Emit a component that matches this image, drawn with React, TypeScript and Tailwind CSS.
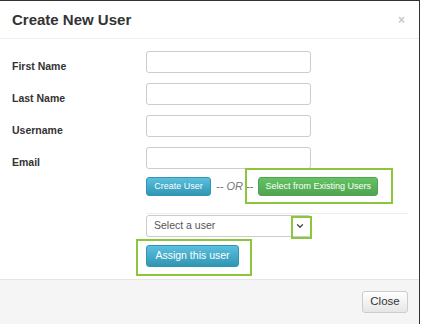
import { ChevronDown } from "lucide-react";

const font = { fontFamily: '"Liberation Sans", Arial, sans-serif' };

function Row({ label }: { label: string }) {
  return (
    <div className="flex h-[22px]">
      <label className="w-[134px] pt-[10px] text-[10.5px] font-bold leading-none text-[#333]">{label}</label>
      <input className="w-[165px] h-[22px] rounded-[3px] border border-[#ccc] bg-white outline-none" />
    </div>
  );
}

export default function App() {
  return (
    <div className="w-[424px] h-[330px] bg-white" style={font}>
      <div className="relative w-[420px] h-[324px] border-t border-r border-[#333] bg-white flex flex-col">
        {/* header */}
        <div className="h-[38px] shrink-0 flex items-center justify-between pl-3 pr-[14px] border-b border-[#eee]">
          <h3 className="text-[15px] font-bold text-[#333] pt-[2px]">Create New User</h3>
          <span className="text-[12px] font-bold text-[#c8c8c8] leading-none">×</span>
        </div>

        {/* body */}
        <div className="flex-1 pl-3 pt-[12px]">
          <div className="flex flex-col gap-[10px]">
            <Row label="First Name" />
            <Row label="Last Name" />
            <Row label="Username" />
            <Row label="Email" />
          </div>

          <div className="ml-[134px] mt-[8px] flex items-center h-[19px]">
            <button className="h-[19px] w-[65px] rounded-[3px] border border-[#2f96b4] bg-gradient-to-b from-[#5bc0de] to-[#2f96b4] text-[9px] text-white">
              Create User
            </button>
            <span className="ml-[5px] text-[11px] italic text-[#777]">-- OR --</span>
            <button className="ml-[5px] h-[19px] w-[120px] rounded-[3px] border border-[#51a351] bg-gradient-to-b from-[#62c462] to-[#51a351] text-[9px] text-white">
              Select from Existing Users
            </button>
          </div>

          <div className="ml-[134px] mr-[11px] mt-[17px] border-t border-[#eee] pt-[1px]">
            <div className="flex h-[22px] w-[165px] items-center rounded-[3px] border border-[#ccc] bg-white">
              <span className="flex-1 pl-[7px] text-[10.5px] text-[#555]">Select a user</span>
              <span className="w-[20px] flex justify-center text-[#444]">
                <ChevronDown size={10} strokeWidth={3} />
              </span>
            </div>
            <button className="mt-[8px] h-[22px] w-[93px] rounded-[3px] border border-[#2f96b4] bg-gradient-to-b from-[#5bc0de] to-[#2f96b4] text-[10.5px] text-white">
              Assign this user
            </button>
          </div>
        </div>

        {/* footer */}
        <div className="h-[45px] shrink-0 border-t border-[#e5e5e5] bg-[#f5f5f5] flex items-center justify-end pr-[11px]">
          <button className="h-[22px] w-[46px] rounded-[3px] border border-[#ccc] bg-gradient-to-b from-white to-[#e6e6e6] text-[11.5px] text-[#333]">
            Close
          </button>
        </div>

        {/* annotation highlights */}
        <div className="absolute left-[245px] top-[167px] w-[148px] h-[36px] border-2 border-[#8cc63f] pointer-events-none" />
        <div className="absolute left-[291px] top-[215px] w-[21px] h-[23px] border-2 border-[#8cc63f] pointer-events-none" />
        <div className="absolute left-[136px] top-[238px] w-[116px] h-[37px] border-2 border-[#8cc63f] pointer-events-none" />
      </div>
    </div>
  );
}
